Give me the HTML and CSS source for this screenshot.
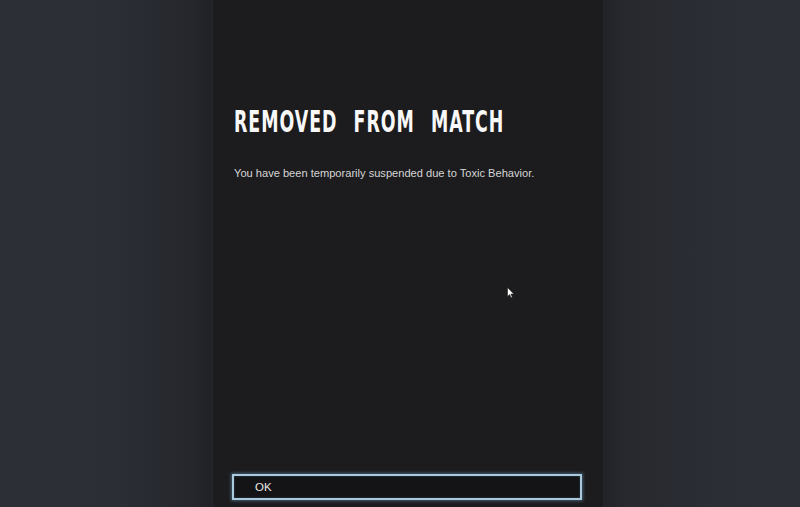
FILE: index.html
```html
<!DOCTYPE html>
<html>
<head>
<meta charset="utf-8">
<link rel="stylesheet" href="styles.css">
</head>
<body>
<div class="screen">
  <div class="side side-left"></div>
  <div class="panel">
    <div class="content">
      <h1 class="title"><span class="title-text">REMOVED FROM MATCH</span></h1>
      <p class="message">You have been temporarily suspended due to Toxic Behavior.</p>
    </div>
    <button class="ok">OK</button>
  </div>
  <div class="side side-right"></div>
  <svg class="cursor" width="8" height="12" viewBox="0 0 8 12"><path d="M0.5 0.5 L0.5 9.5 L2.6 7.6 L4 10.8 L5.3 10.2 L3.9 7.1 L6.8 7.1 Z" fill="#ffffff" stroke="#222" stroke-width="0.6"/></svg>
</div>
</body>
</html>
```
FILE: styles.css
```css
html, body {
  margin: 0;
  padding: 0;
  width: 800px;
  height: 507px;
  overflow: hidden;
  background: #2a2d33;
}
.screen {
  position: relative;
  display: flex;
  width: 800px;
  height: 507px;
}
.side-left {
  width: 212px;
  flex: none;
  background: linear-gradient(to right, #2c2f36 0%, #2b2e35 55%, #24262b 92%, #202126 100%);
}
.side-right {
  flex: 1;
  background: linear-gradient(to right, #222328 0%, #27292e 12%, #2b2e35 60%, #2c2f36 100%);
}
.panel {
  width: 391px;
  flex: none;
  background: #1c1c1e;
  display: flex;
  flex-direction: column;
  padding: 0 22px 7px 19px;
  box-sizing: border-box;
  border-left: 1px solid #26272b;
}
.content {
  flex: 1;
  padding-left: 2px;
}
.title {
  margin: 105px 0 0 0;
  height: 34px;
  font-family: "DejaVu Sans Condensed", "DejaVu Sans", sans-serif;
  font-weight: bold;
  font-stretch: condensed;
  font-size: 30px;
  line-height: 34px;
  color: #f8f8f8;
  white-space: nowrap;
}
.title-text {
  display: inline-block;
  transform: scaleX(0.645);
  transform-origin: left center;
  letter-spacing: 1.5px;
  word-spacing: 14px;
}
.message {
  margin: 27px 0 0 0;
  font-family: "Liberation Sans", Arial, sans-serif;
  font-size: 11.1px;
  line-height: 14px;
  color: #d6d6d6;
}
.ok {
  display: block;
  width: 350px;
  height: 26px;
  box-sizing: border-box;
  background: #141416;
  border: 2px solid #a9c9dd;
  box-shadow: 0 0 3px 1px rgba(120, 170, 210, 0.45), inset 0 0 2px rgba(120, 170, 210, 0.4);
  color: #e8e8e8;
  font-family: "Liberation Sans", Arial, sans-serif;
  font-size: 11.5px;
  text-align: left;
  padding: 0 0 0 21px;
  cursor: default;
}
.cursor {
  position: absolute;
  left: 507px;
  top: 287px;
}
```
